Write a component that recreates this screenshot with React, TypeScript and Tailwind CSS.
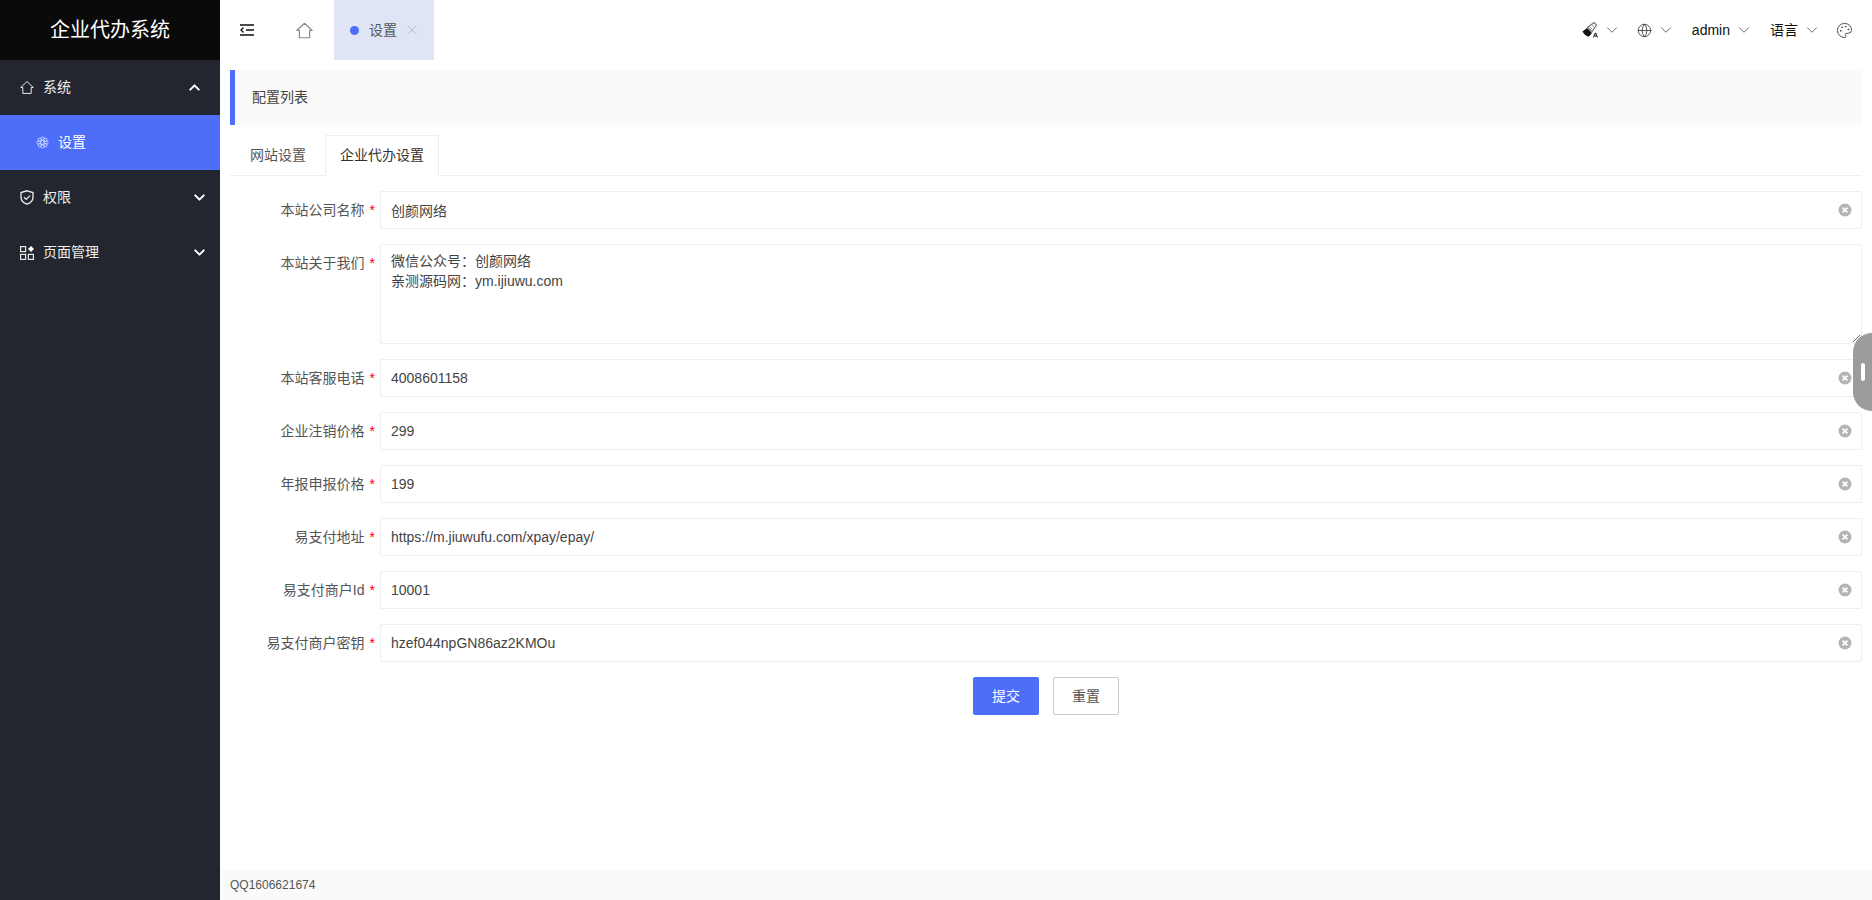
import { ChevronDown, ChevronUp, Globe, Palette, X } from "lucide-react";

const fields = [
  { label: "本站客服电话", value: "4008601158" },
  { label: "企业注销价格", value: "299" },
  { label: "年报申报价格", value: "199" },
  { label: "易支付地址", value: "https://m.jiuwufu.com/xpay/epay/" },
  { label: "易支付商户Id", value: "10001" },
  { label: "易支付商户密钥", value: "hzef044npGN86az2KMOu" },
];

const petals = [0, 45, 90, 135, 180, 225, 270, 315];

const ClearIcon = () => (
  <svg width="14" height="14" viewBox="0 0 14 14" className="shrink-0">
    <circle cx="7" cy="7" r="6.5" fill="#b4b4b4" />
    <path d="M4.6 4.6l4.8 4.8M9.4 4.6l-4.8 4.8" stroke="#fff" strokeWidth="1.8" />
  </svg>
);

const Label = ({ text }: { text: string }) => (
  <label className="w-[150px] shrink-0 pr-[5px] text-right leading-[38px] text-[#555]">
    {text}
    <span className="ml-[5px] text-[#f00]">*</span>
  </label>
);

const InputRow = ({ label, value }: { label: string; value: string }) => (
  <div className="flex mb-[15px]">
    <Label text={label} />
    <div className="flex flex-1 items-center h-[38px] border border-[#eee] rounded-[2px] pr-[9px]">
      <input
        readOnly
        value={value}
        className="flex-1 h-full pl-[10px] outline-none text-[#444] bg-transparent"
      />
      <ClearIcon />
    </div>
  </div>
);

const IndentIcon = () => (
  <svg width="14" height="12" viewBox="0 0 14 12" fill="none" stroke="#111" strokeWidth="1.5">
    <path d="M0 1h14M6 6h8M0 11h14" />
    <path d="M3.5 3.5L1 6l2.500 2.500" strokeWidth="1.300" />
  </svg>
);

const HomeIcon = ({ size, color }: { size: number; color: string }) => (
  <svg width={size} height={size} viewBox="0 0 16 16" fill="none" stroke={color} strokeWidth="1.100">
    <path d="M8 1.200L15.200 8H12.800V14.800H3.200V8H0.800Z" strokeLinejoin="round" />
  </svg>
);

const GearIcon = () => (
  <svg width="13" height="13" viewBox="0 0 14 14" fill="none" stroke="#cdd6ff" strokeWidth="1">
    <circle cx="7" cy="7" r="2" />
    {petals.map((a) => (
      <circle key={a} cx="7" cy="2.800" r="1.800" transform={`rotate(${a} 7 7)`} />
    ))}
  </svg>
);

const ShieldIcon = () => (
  <svg width="14" height="15" viewBox="0 0 14 15" fill="none" stroke="#eee" strokeWidth="1.300">
    <path d="M7 .8L13 2.600V7.500C13 11 10 13 7 14.200C4 13 1 11 1 7.500V2.600Z" />
    <path d="M4 7.200l2.200 2.200L10 5.600" />
  </svg>
);

const PagesIcon = () => (
  <svg width="14" height="14" viewBox="0 0 14 14" fill="none" stroke="#e8e8e8" strokeWidth="1.200">
    <rect x="0.600" y="0.600" width="5" height="5" />
    <rect x="0.600" y="8.400" width="5" height="5" />
    <rect x="8.400" y="8.400" width="5" height="5" />
    <path d="M11 0l3 3-3 3-3-3z" fill="#fff" stroke="none" />
  </svg>
);

const BrushIcon = () => (
  <svg width="16" height="16" viewBox="0 0 16 16">
    <path d="M0.500 9.500l4.500-3.500 5 5-3 3.500c-2.500 0-4.500-1.500-6.500-5z" fill="#111" />
    <path d="M5.500 5.500l6.500-5 2.500 2.500-4.500 6.500z" fill="none" stroke="#777" strokeWidth="1.200" />
    <path d="M8 5l2 2M10 3l2 2" stroke="#777" strokeWidth="0.800" />
    <path d="M11.500 15.500l1.800-4.500h.4l1.800 4.500M12.300 14h2.400" fill="none" stroke="#111" strokeWidth="1" />
  </svg>
);

const SideItem = ({
  icon,
  text,
  open,
}: {
  icon: React.ReactNode;
  text: string;
  open?: boolean;
}) => (
  <div className="flex items-center h-[55px] pl-5 text-[#eee]">
    <span className="w-[14px] flex justify-center">{icon}</span>
    <span className="ml-[9px]">{text}</span>
    {open ? (
      <ChevronUp size={17} strokeWidth={2.800} className="ml-auto mr-[17px] text-white" />
    ) : (
      <ChevronDown size={17} strokeWidth={2.800} className="ml-auto mr-[12px] text-white" />
    )}
  </div>
);

const Caret = () => <ChevronDown size={18} strokeWidth={1.300} className="text-[#666]" />;

export default function App() {
  return (
    <div
      className="relative flex h-screen overflow-hidden bg-white text-[14px]"
      style={{ fontFamily: '"Liberation Sans", "Noto Sans CJK SC", sans-serif' }}
    >
      <aside className="w-[220px] shrink-0 bg-[#23262e]">
        <div className="flex items-center justify-center h-[60px] bg-[#0a0a0a] text-[20px] text-white">
          企业代办系统
        </div>
        <SideItem icon={<HomeIcon size={15} color="#eee" />} text="系统" open />
        <div className="flex items-center h-[55px] pl-9 bg-[#4e6ef9] text-white">
          <GearIcon />
          <span className="ml-[9px]">设置</span>
        </div>
        <SideItem icon={<ShieldIcon />} text="权限" />
        <SideItem icon={<PagesIcon />} text="页面管理" />
      </aside>

      <div className="flex flex-1 flex-col min-w-0">
        <header className="flex items-center h-[60px] shrink-0 pr-[19px]">
          <div className="ml-5">
            <IndentIcon />
          </div>
          <div className="ml-[42px]">
            <HomeIcon size={17} color="#888" />
          </div>
          <div className="flex items-center h-full w-[100px] ml-[21px] pl-4 bg-[#dfe5f5]">
            <span className="w-[9px] h-[9px] rounded-full bg-[#4e6ef9]" />
            <span className="ml-[10px] text-[#555]">设置</span>
            <X size={18} strokeWidth={1.100} className="ml-[6px] text-[#bbb]" />
          </div>
          <div className="ml-auto flex items-center text-[#111]">
            <BrushIcon />
            <span className="ml-[5px] mr-[1px]">
              <Caret />
            </span>
            <Globe size={15} strokeWidth={1.300} className="ml-[15px] text-[#333]" />
            <span className="ml-[5px] mr-[1px]">
              <Caret />
            </span>
            <span className="ml-4">admin</span>
            <span className="ml-[5px] mr-[1px]">
              <Caret />
            </span>
            <span className="ml-4">语言</span>
            <span className="ml-[5px] mr-[1px]">
              <Caret />
            </span>
            <Palette size={17} strokeWidth={1.200} className="ml-[14px] text-[#333]" />
          </div>
        </header>

        <main className="flex-1 pt-[10px] pl-[10px] pr-[10px]">
          <div className="flex items-center h-[55px] pl-[17px] border-l-[5px] border-[#4e6ef9] bg-[#fafafa] text-[#444] rounded-r-[2px]">
            配置列表
          </div>

          <div className="flex h-[41px] mt-[10px] border-b border-[#eee]">
            <div className="w-[95px] pl-5 leading-[40px] text-[#555]">网站设置</div>
            <div className="w-[114px] h-[41px] text-center leading-[38px] text-[#333] bg-white border border-b-0 border-[#eee] rounded-t-[2px]">
              企业代办设置
            </div>
          </div>

          <form className="mt-[15px]">
            <InputRow label="本站公司名称" value="创颜网络" />
            <div className="flex mb-[15px]">
              <Label text="本站关于我们" />
              <textarea
                readOnly
                value={"微信公众号：创颜网络\n亲测源码网：ym.ijiuwu.com"}
                className="flex-1 h-[100px] px-[10px] pt-[6px] leading-5 border border-[#eee] rounded-[2px] outline-none text-[#444] resize-y"
              />
            </div>
            {fields.map((f) => (
              <InputRow key={f.label} label={f.label} value={f.value} />
            ))}
            <div className="flex justify-center gap-[14px]">
              <button
                type="button"
                className="w-[66px] h-[38px] rounded-[2px] bg-[#4e6ef9] text-white"
              >
                提交
              </button>
              <button
                type="button"
                className="w-[66px] h-[38px] rounded-[2px] border border-[#c9c9c9] bg-white text-[#555]"
              >
                重置
              </button>
            </div>
          </form>
        </main>

        <footer className="flex items-center h-[30px] shrink-0 pl-[10px] bg-[#fafafa] text-[12px] text-[#555]">
          QQ1606621674
        </footer>
      </div>

      {/* floating drawer handle */}
      <div className="absolute right-0 top-[333px] flex items-center justify-center w-[19px] h-[78px] rounded-l-[19px] bg-[#9c9c9c]">
        <span className="w-1 h-[18px] rounded-[2px] bg-white" />
      </div>
    </div>
  );
}
